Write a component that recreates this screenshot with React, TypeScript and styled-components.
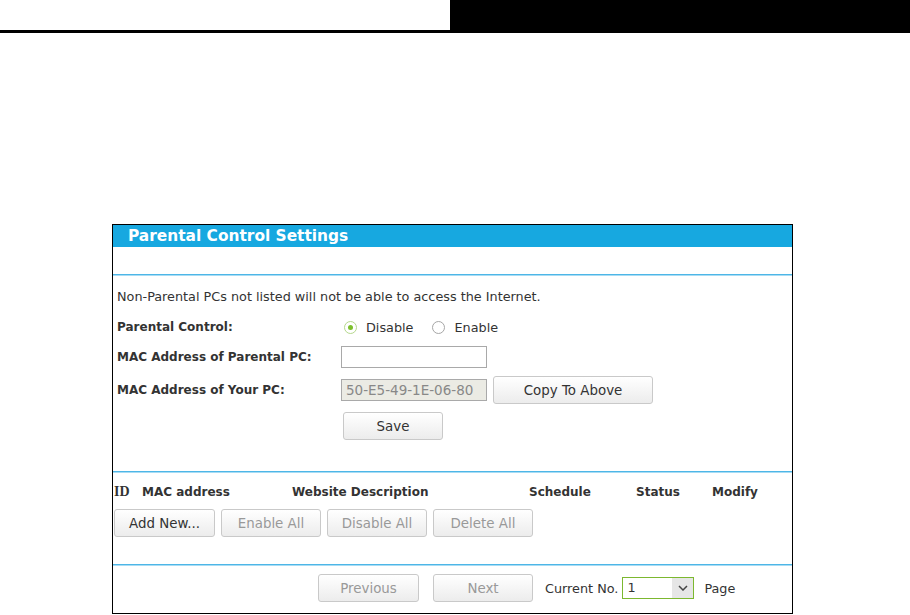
import React from "react";
import styled, { createGlobalStyle } from "styled-components";

const Global = createGlobalStyle`
  html, body { margin: 0; padding: 0; background: #fff; }
  body { font-family: "DejaVu Sans", Verdana, sans-serif; font-size: 12.8px; color: #333; }
  * { box-sizing: border-box; }
`;

const TopBar = styled.div`
  display: flex;
  height: 33px;
`;
const TopLeft = styled.div`
  width: 450px;
  border-bottom: 3px solid #000;
`;
const TopRight = styled.div`
  flex: 1;
  background: #000;
`;

const Panel = styled.div`
  margin: 191px 0 0 112px;
  width: 681px;
  border: 1px solid #000;
  display: flex;
  flex-direction: column;
`;

const TitleBand = styled.div`
  height: 22px;
  background: #17a8e0;
  color: #fff;
  font-weight: bold;
  font-size: 15.4px;
  line-height: 22px;
  padding-left: 15px;
`;

const Blank = styled.div`
  height: 27px;
`;

const Rule = styled.div`
  height: 2px;
  background: #4db6e7;
  border-bottom: 1px solid #a8dcf4;
`;

const Section = styled.div<{ $pt: number; $pb: number }>`
  padding: ${(p) => p.$pt}px 0 ${(p) => p.$pb}px 0;
  display: flex;
  flex-direction: column;
`;

const Note = styled.div`
  height: 16px;
  line-height: 16px;
  padding-left: 4px;
  margin-bottom: 11px;
`;

const Form = styled.div`
  display: grid;
  grid-template-columns: 224px auto;
  row-gap: 8px;
  padding-left: 4px;
  align-items: center;
`;

const Label = styled.div`
  font-weight: bold;
  font-size: 12px;
`;

const Controls = styled.div<{ $h: number }>`
  display: flex;
  align-items: center;
  gap: 6px;
  height: ${(p) => p.$h}px;
`;

const RadioGroup = styled.div`
  display: flex;
  align-items: center;
  height: 22px;
`;

const RadioItem = styled.label`
  display: flex;
  align-items: center;
  margin-right: 16px;
  margin-left: 3px;
`;

const RadioDot = styled.span<{ $on?: boolean }>`
  width: 13px;
  height: 13px;
  border-radius: 50%;
  border: 1px solid ${(p) => (p.$on ? "#b5d88c" : "#a6a6a6")};
  background: #fff;
  margin-right: 9px;
  position: relative;
  &::after {
    content: "";
    display: ${(p) => (p.$on ? "block" : "none")};
    position: absolute;
    left: 3px;
    top: 3px;
    width: 5px;
    height: 5px;
    border-radius: 50%;
    background: #7cbf2c;
  }
`;

const TextInput = styled.input`
  width: 146px;
  height: 22px;
  border: 1px solid #a9a9a9;
  padding: 0 4px;
  font-family: "DejaVu Sans", Verdana, sans-serif;
  font-size: 13.5px;
  color: #888;
  &:disabled {
    background: #ebebe4;
    color: #888;
  }
`;

const Button = styled.button<{ $w: number; $dim?: boolean }>`
  width: ${(p) => p.$w}px;
  height: 28px;
  border: 1px solid #c9c9c9;
  border-radius: 3px;
  background: linear-gradient(#ffffff, #ececec);
  font-family: "DejaVu Sans", Verdana, sans-serif;
  font-size: 13.4px;
  color: ${(p) => (p.$dim ? "#999" : "#333")};
  padding: 0;
  flex-shrink: 0;
`;

const SaveWrap = styled.div`
  padding-left: 2px;
`;

const TableHead = styled.div`
  display: grid;
  grid-template-columns: 28px 150px 237px 107px 76px auto;
  height: 16px;
  line-height: 16px;
  padding-left: 1px;
  font-weight: bold;
  font-size: 12px;
  margin-bottom: 9px;
`;

const IdCell = styled.span`
  font-family: "Liberation Serif", serif;
  font-size: 14px;
`;

const ButtonRow = styled.div`
  display: flex;
  gap: 6px;
  padding-left: 1px;
`;

const Pager = styled.div`
  display: flex;
  align-items: center;
  padding-left: 205px;
`;

const Spacer = styled.span<{ $w: number }>`
  width: ${(p) => p.$w}px;
  flex-shrink: 0;
`;

const Select = styled.div`
  width: 72px;
  height: 22px;
  border: 1px solid #7cb82f;
  display: flex;
  align-items: stretch;
`;

const SelectValue = styled.span`
  flex: 1;
  padding-left: 4px;
  line-height: 20px;
  color: #333;
`;

const SelectArrow = styled.span`
  width: 21px;
  background: #e6e6e6;
  display: flex;
  align-items: center;
  justify-content: center;
`;

export default function App() {
  return (
    <>
      <Global />
      <TopBar>
        <TopLeft />
        <TopRight />
      </TopBar>
      <Panel>
        <TitleBand>Parental Control Settings</TitleBand>
        <Blank />
        <Rule />
        <Section $pt={13} $pb={31}>
          <Note>Non-Parental PCs not listed will not be able to access the Internet.</Note>
          <Form>
            <Label>Parental Control:</Label>
            <RadioGroup>
              <RadioItem>
                <RadioDot $on />
                Disable
              </RadioItem>
              <RadioItem>
                <RadioDot />
                Enable
              </RadioItem>
            </RadioGroup>
            <Label>MAC Address of Parental PC:</Label>
            <Controls $h={22}>
              <TextInput defaultValue="" />
            </Controls>
            <Label>MAC Address of Your PC:</Label>
            <Controls $h={28}>
              <TextInput disabled defaultValue="50-E5-49-1E-06-80" />
              <Button $w={160}>Copy To Above</Button>
            </Controls>
            <span />
            <SaveWrap>
              <Button $w={100}>Save</Button>
            </SaveWrap>
          </Form>
        </Section>
        <Rule />
        <Section $pt={11} $pb={27}>
          <TableHead>
            <IdCell>ID</IdCell>
            <span>MAC address</span>
            <span>Website Description</span>
            <span>Schedule</span>
            <span>Status</span>
            <span>Modify</span>
          </TableHead>
          <ButtonRow>
            <Button $w={101}>Add New...</Button>
            <Button $w={100} $dim>Enable All</Button>
            <Button $w={100} $dim>Disable All</Button>
            <Button $w={100} $dim>Delete All</Button>
          </ButtonRow>
        </Section>
        <Rule />
        <Section $pt={8} $pb={11}>
          <Pager>
            <Button $w={101} $dim>Previous</Button>
            <Spacer $w={14} />
            <Button $w={100} $dim>Next</Button>
            <Spacer $w={12} />
            <span>Current No.</span>
            <Spacer $w={4} />
            <Select>
              <SelectValue>1</SelectValue>
              <SelectArrow>
                <svg width="10" height="6" viewBox="0 0 10 6">
                  <path d="M1 1 L5 5 L9 1" fill="none" stroke="#444" strokeWidth="1.5" />
                </svg>
              </SelectArrow>
            </Select>
            <Spacer $w={10} />
            <span>Page</span>
          </Pager>
        </Section>
      </Panel>
    </>
  );
}
